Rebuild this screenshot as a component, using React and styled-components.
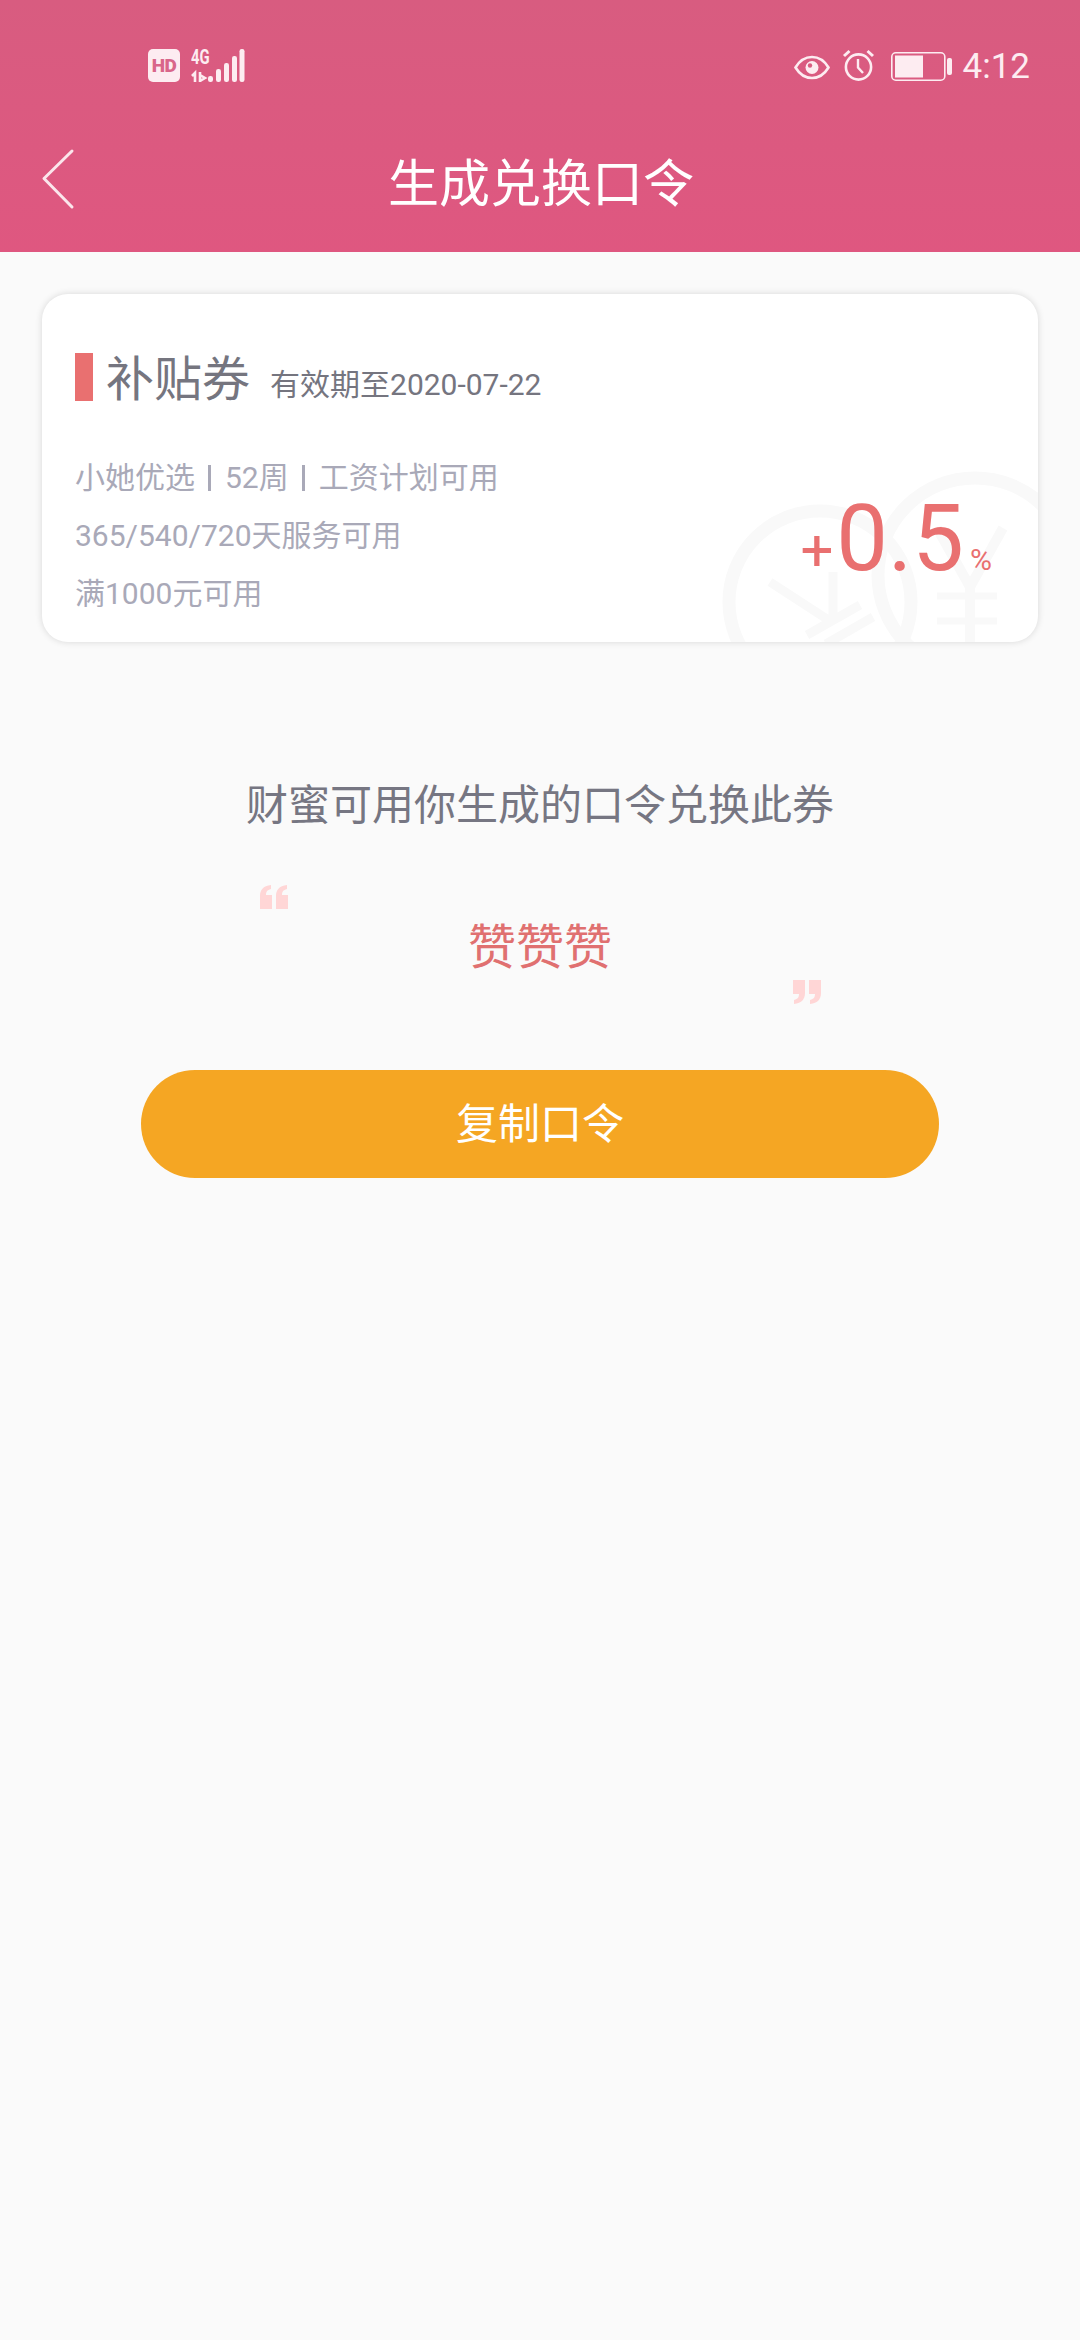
import React from "react";
import styled, { createGlobalStyle } from "styled-components";

const Global = createGlobalStyle`
  html, body { margin: 0; padding: 0; background: #fafafa; }
  body { font-family: Roboto, "Noto Sans CJK SC", sans-serif; }
  * { box-sizing: border-box; }
`;

const Page = styled.div`
  width: 1080px;
  height: 2340px;
  background: #fafafa;
  overflow: hidden;
`;

const Header = styled.header`
  height: 252px;
  background: linear-gradient(180deg, #d85c80 0%, #df5780 100%);
  display: flex;
  flex-direction: column;
`;

const StatusBar = styled.div`
  height: 132px;
  padding: 0 50px 0 148px;
  display: flex;
  align-items: flex-start;
  justify-content: space-between;
  color: #fdecf1;
`;

const StatusLeft = styled.div`
  display: flex;
  align-items: flex-start;
  gap: 11px;
  padding-top: 49px;
`;

const HdBadge = styled.div`
  width: 32px;
  height: 33px;
  border-radius: 5px;
  background: #fdecf1;
  color: #d9668a;
  font: 900 19px/33px "Roboto", sans-serif;
  text-align: center;
  letter-spacing: -0.5px;
`;

const Signal = styled.div`
  position: relative;
  width: 54px;
  height: 34px;
`;

const FourG = styled.span`
  position: absolute;
  left: 0;
  top: -2px;
  font: 700 20px/20px "Roboto", sans-serif;
  transform: scaleX(0.74);
  transform-origin: left center;
  color: #fdecf1;
`;

const SignalIcon = styled.svg`
  display: block;
`;

const StatusRight = styled.div`
  display: flex;
  align-items: flex-start;
  padding-top: 48px;
`;

const StatusIcon = styled.svg`
  display: block;
  margin-right: ${(p) => p.$gap}px;
  margin-top: ${(p) => p.$top}px;
`;

const Time = styled.span`
  font: 400 35px/38px Roboto, sans-serif;
  margin-left: 2px;
  color: #fdecf1;
`;

const NavBar = styled.div`
  position: relative;
  height: 120px;
  display: flex;
  align-items: center;
  justify-content: center;
`;

const BackIcon = styled.svg`
  position: absolute;
  left: 40px;
  top: 16px;
`;

const Title = styled.h1`
  margin: 0 0 15px 2px;
  font: 400 51px/60px Roboto, "Noto Sans CJK SC", sans-serif;
  color: #fff;
`;

const Main = styled.main`
  padding: 42px 42px 0;
`;

const Card = styled.section`
  position: relative;
  height: 348px;
  background: #fff;
  border-radius: 26px;
  box-shadow: 0 0 7px rgba(0, 0, 0, 0.14);
  padding: 59px 33px 0;
  overflow: hidden;
`;

const Watermark = styled.svg`
  position: absolute;
  right: 0;
  bottom: 0;
`;

const CardHead = styled.div`
  position: relative;
  display: flex;
  align-items: center;
  height: 48px;
`;

const Mark = styled.i`
  width: 18px;
  height: 48px;
  background: #e97070;
  margin-right: 13px;
`;

const CardTitle = styled.span`
  font-size: 48px;
  line-height: 48px;
  color: #75757f;
  margin-right: 20px;
  position: relative;
  top: 3px;
`;

const Expiry = styled.span`
  font-size: 30px;
  line-height: 36px;
  color: #75757f;
  margin-top: 15px;
`;

const Rules = styled.div`
  position: relative;
  margin-top: 59px;
  display: flex;
  flex-direction: column;
  gap: 22px;
`;

const Rule = styled.div`
  font-size: 30px;
  line-height: 36px;
  height: 36px;
  color: #a9a9b8;
  display: flex;
  align-items: center;
`;

const Sep = styled.i`
  width: 3px;
  height: 26px;
  background: #a9a9b8;
  margin: 0 ${(p) => p.$right}px 0 13px;
`;

const Rate = styled.div`
  position: absolute;
  right: 46px;
  bottom: 46px;
  display: flex;
  align-items: baseline;
  color: #e97070;
  font-family: Roboto, sans-serif;
`;

const Plus = styled.span`
  font-size: 58px;
  line-height: 92px;
  margin-right: 3px;
`;

const Value = styled.span`
  font-size: 92px;
  line-height: 92px;
`;

const Percent = styled.span`
  font-size: 30px;
  line-height: 30px;
  margin-left: 6px;
`;

const Hint = styled.p`
  margin: 136px 0 0;
  text-align: center;
  font-size: 42px;
  line-height: 56px;
  color: #767682;
`;

const QuoteBox = styled.div`
  position: relative;
  height: 236px;
  display: flex;
  justify-content: center;
  padding-top: 82px;
`;

const Code = styled.span`
  font-size: 48px;
  line-height: 64px;
  height: 64px;
  color: #e07070;
`;

const Quote = styled.svg`
  position: absolute;
  left: ${(p) => p.$left}px;
  top: ${(p) => p.$top}px;
`;

const CopyButton = styled.button`
  display: block;
  width: 798px;
  height: 108px;
  margin: 0 auto;
  border: 0;
  border-radius: 54px;
  background: #f5a623;
  color: #fff;
  font: 400 42px/108px Roboto, "Noto Sans CJK SC", sans-serif;
`;

export default function App() {
  return (
    <Page>
      <Global />
      <Header>
        <StatusBar>
          <StatusLeft>
            <HdBadge>HD</HdBadge>
            <Signal>
              <FourG>4G</FourG>
              <SignalIcon width="54" height="34" viewBox="0 0 54 34">
                <g fill="none" stroke="#fdecf1" strokeWidth="2.6">
                  <path d="M1 27l3-3v9M9 23v10M9 26l5 3-5 3" />
                </g>
                <g fill="#fdecf1">
                  <rect x="17" y="27" width="5" height="6" rx="2.2" />
                  <rect x="25" y="20" width="5" height="13" rx="2.2" />
                  <rect x="33" y="14" width="5" height="19" rx="2.2" />
                  <rect x="41" y="7" width="5" height="26" rx="2.2" />
                  <rect x="48.5" y="0" width="5" height="33" rx="2.2" />
                </g>
              </SignalIcon>
            </Signal>
          </StatusLeft>
          <StatusRight>
            <StatusIcon $gap={12} $top={7} width="36" height="25" viewBox="0 0 36 25">
              <path d="M1.5 12.5C6 5 11.5 2 18 2s12 3 16.5 10.5C30 20 24.5 23 18 23S6 20 1.5 12.5Z" fill="none" stroke="#fdecf1" strokeWidth="2.6" />
              <circle cx="18" cy="12.5" r="6.5" fill="#fdecf1" />
              <circle cx="16" cy="10.5" r="2.2" fill="#d85c80" />
            </StatusIcon>
            <StatusIcon $gap={16} $top={1} width="33" height="33" viewBox="0 0 33 33">
              <circle cx="16.5" cy="18" r="12.6" fill="none" stroke="#fdecf1" strokeWidth="2.6" />
              <path d="M16 10v8.5l5 5.5" fill="none" stroke="#fdecf1" strokeWidth="2.4" />
              <path d="M2 7l5.5-5M31 7l-5.5-5" fill="none" stroke="#fdecf1" strokeWidth="3" />
            </StatusIcon>
            <StatusIcon $gap={9} $top={4} width="61" height="29" viewBox="0 0 61 29">
              <rect x="0.8" y="0.8" width="53" height="27.4" rx="4" fill="none" stroke="#fdecf1" strokeWidth="1.6" />
              <rect x="4" y="3.5" width="28" height="22" fill="#fdecf1" />
              <rect x="56" y="6" width="5" height="17" rx="2" fill="#fdecf1" />
            </StatusIcon>
            <Time>4:12</Time>
          </StatusRight>
        </StatusBar>
        <NavBar>
          <BackIcon width="36" height="62" viewBox="0 0 36 62">
            <path d="M32 3 4 30.5 32 59" fill="none" stroke="#fbe6ec" strokeWidth="3" strokeLinecap="round" strokeLinejoin="round" />
          </BackIcon>
          <Title>生成兑换口令</Title>
        </NavBar>
      </Header>
      <Main>
        <Card>
          <Watermark width="330" height="180" viewBox="0 0 330 180">
            <g fill="none" stroke="#f9f9f9" strokeWidth="13">
              <circle cx="112" cy="140" r="91" />
              <circle cx="267" cy="113" r="97" />
            </g>
            <g fill="none" stroke="#f9f9f9">
              <path d="M62 120 125 161M99 173 152 143M118 182 165 155M125 161V110" strokeWidth="9" />
              <path d="M229 134h60M229 159h60" strokeWidth="7" />
              <path d="M229 66 262 125 295 66M262 125v65" strokeWidth="10" />
            </g>
          </Watermark>
          <CardHead>
            <Mark />
            <CardTitle>补贴券</CardTitle>
            <Expiry>有效期至2020-07-22</Expiry>
          </CardHead>
          <Rules>
            <Rule>
              小她优选<Sep $right={14} />52周<Sep $right={14} />工资计划可用
            </Rule>
            <Rule>365/540/720天服务可用</Rule>
            <Rule>满1000元可用</Rule>
          </Rules>
          <Rate>
            <Plus>+</Plus>
            <Value>0.5</Value>
            <Percent>%</Percent>
          </Rate>
        </Card>
        <Hint>财蜜可用你生成的口令兑换此券</Hint>
        <QuoteBox>
          <Quote $left={218} $top={51} width="28" height="24" viewBox="0 0 28 24">
            <path fill="#ffd6d6" d="M0 24V11C0 5 3 1 11 0v4C7 5 6 7 6 10h6v14ZM16 24V11c0-6 3-10 11-11v4c-4 1-5 3-5 6h6v14Z" />
          </Quote>
          <Code>赞赞赞</Code>
          <Quote $left={751} $top={146} width="28" height="24" viewBox="0 0 28 24" style={{ transform: "rotate(180deg)" }}>
            <path fill="#ffd6d6" d="M0 24V11C0 5 3 1 11 0v4C7 5 6 7 6 10h6v14ZM16 24V11c0-6 3-10 11-11v4c-4 1-5 3-5 6h6v14Z" />
          </Quote>
        </QuoteBox>
        <CopyButton>复制口令</CopyButton>
      </Main>
    </Page>
  );
}
